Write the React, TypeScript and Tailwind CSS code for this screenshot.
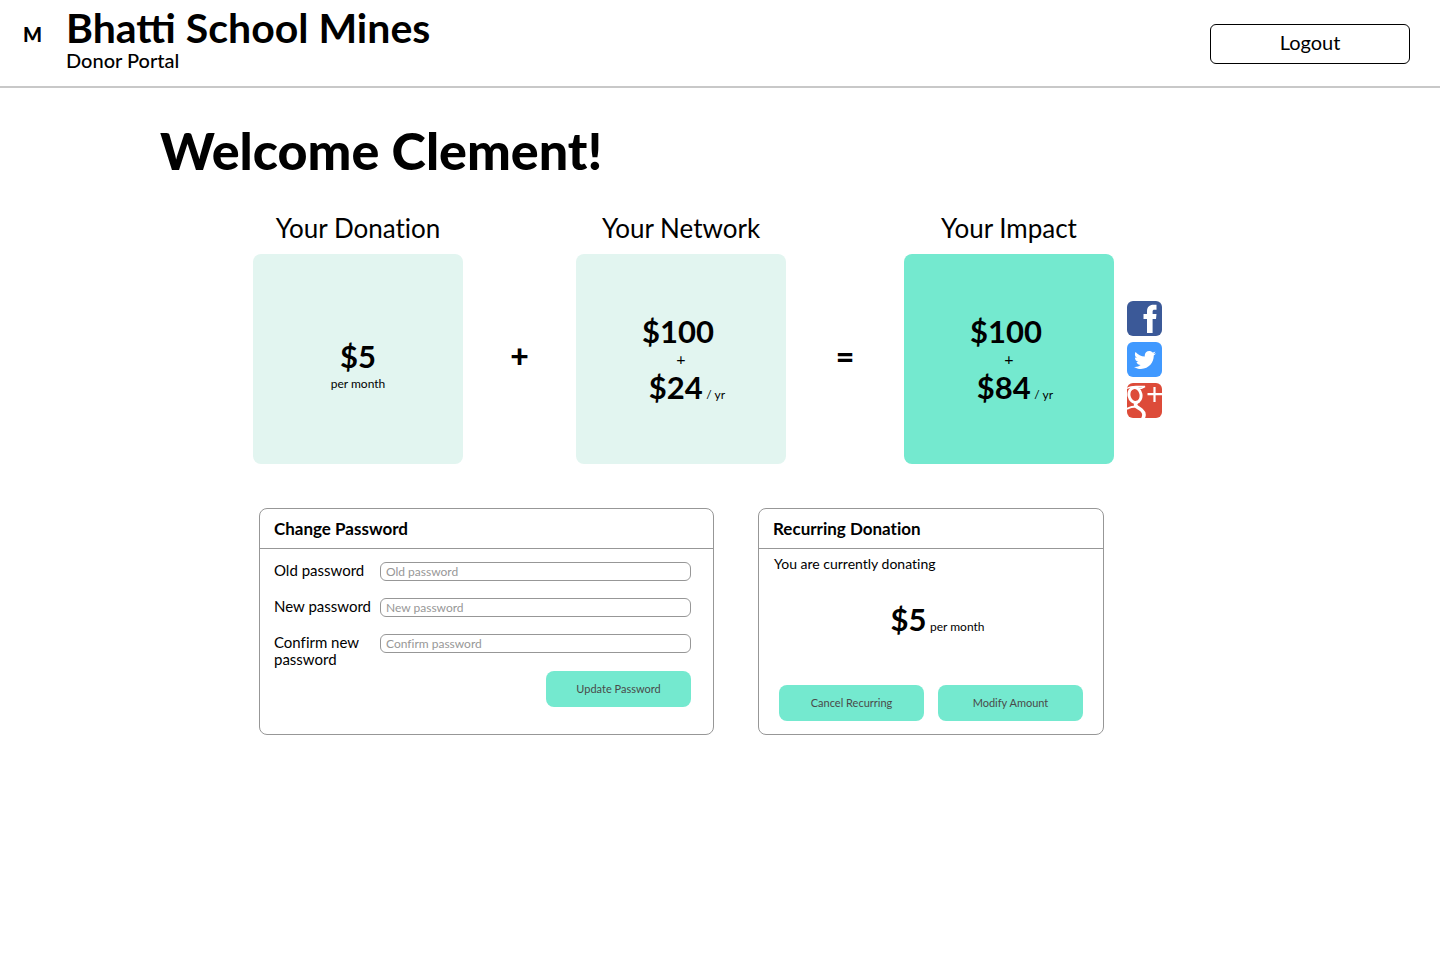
import type { ReactNode } from "react";
import { FaTwitter } from "react-icons/fa";

function Tile({ title, strong, children }: { title: string; strong?: boolean; children: ReactNode }) {
  return (
    <section className="flex w-[210px] flex-col items-center">
      <h2 className="mb-[10px] text-[26px] leading-8 whitespace-nowrap">{title}</h2>
      <div
        className={`flex h-[210px] w-full flex-col items-center justify-center rounded-lg ${
          strong ? "bg-[#74e9cf]" : "bg-[#e2f5f0]"
        }`}
      >
        {children}
      </div>
    </section>
  );
}

function Totals({ once, yearly }: { once: string; yearly: string }) {
  return (
    <>
      <p className="pr-[6px] text-[31px] leading-9 font-bold">{once}</p>
      <p className="text-base leading-5">+</p>
      <p className="pl-3 text-[31px] leading-9 font-bold">
        {yearly} <span className="-ml-1 text-xs font-normal">/ yr</span>
      </p>
    </>
  );
}

function Operator({ className, children }: { className: string; children: ReactNode }) {
  return <span className={`pt-[124px] text-center text-[32px] leading-10 font-black ${className}`}>{children}</span>;
}

function Panel({ title, className, children }: { title: string; className: string; children: ReactNode }) {
  return (
    <section className={`rounded-lg border border-[#979797] ${className}`}>
      <h3 className="border-b border-[#979797] px-[14px] py-2 text-[17px] leading-[23px] font-bold">{title}</h3>
      {children}
    </section>
  );
}

function Field({ id, label, placeholder }: { id: string; label: string; placeholder: string }) {
  return (
    <div className="flex h-9 items-start">
      <label htmlFor={id} className="w-[106px] pr-2 text-[15px] leading-[17px]">
        {label}
      </label>
      <input
        id={id}
        type="password"
        placeholder={placeholder}
        className="h-[19px] min-w-0 flex-1 rounded-md border border-[#979797] px-[5px] text-xs placeholder:text-[#979797]"
      />
    </div>
  );
}

function ActionButton({ children }: { children: ReactNode }) {
  return (
    <button type="button" className="h-9 w-[145px] rounded-lg bg-[#74e9cf] text-[11px] text-[#4a4a4a]">
      {children}
    </button>
  );
}

export default function App() {
  return (
    <div className="min-h-screen bg-white font-[Lato,sans-serif] text-black">
      <header className="flex items-start justify-between border-b-2 border-[#c8c8c8] pr-[30px] pb-[14px] pl-[23px]">
        <div className="flex">
          <span className="w-[43px] pt-[22px] text-xl leading-6 font-black">M</span>
          <div className="pt-[6px]">
            <h1 className="text-[41px] leading-[43px] font-bold">Bhatti School Mines</h1>
            <p className="text-[20px] leading-[23px] font-medium">Donor Portal</p>
          </div>
        </div>
        <button type="button" className="mt-6 h-10 w-[200px] rounded-md border border-black pb-1 text-xl leading-6">
          Logout
        </button>
      </header>

      <main className="mx-auto max-w-[1120px] pt-8 [font-variant-ligatures:none]">
        <h1 className="text-[52px] leading-[60px] font-black">Welcome Clement!</h1>

        <div className="mt-8 flex pl-[93px]">
          <Tile title="Your Donation">
            <p className="pt-[14px] text-[31px] leading-9 font-bold">$5</p>
            <p className="text-xs leading-5">per month</p>
          </Tile>
          <Operator className="w-[113px]">+</Operator>
          <Tile title="Your Network">
            <Totals once="$100" yearly="$24" />
          </Tile>
          <Operator className="w-[118px]">=</Operator>
          <Tile title="Your Impact" strong>
            <Totals once="$100" yearly="$84" />
          </Tile>
          <nav className="ml-[13px] flex flex-col gap-[6px] pt-[89px]">
            <a href="#facebook" aria-label="Facebook">
              <svg viewBox="0 0 35 35" className="size-[35px] rounded-md bg-[#3b5998]">
                <path
                  d="M20 32V18h-3.500v-5H20v-2.500C20 6 22.500 3.800 26.500 3.800H29.500V8.800H27.500C26.200 8.800 25.600 9.400 25.600 10.800V13H29.500L29 18H25.600V32z"
                  fill="#fff"
                />
              </svg>
            </a>
            <a
              href="#twitter"
              aria-label="Twitter"
              className="flex size-[35px] items-center justify-center rounded-md bg-[#4099ff] text-white"
            >
              <FaTwitter size={22} />
            </a>
            <a href="#google" aria-label="Google Plus">
              <svg viewBox="0 0 35 35" className="size-[35px] rounded-md bg-[#dd4b39]" fill="none" stroke="#fff">
                <ellipse cx="8" cy="12" rx="6" ry="7.500" strokeWidth="3" transform="rotate(-12 8 12)" />
                <path d="M0 5.500C3 3.500 6 3.500 9 3.500H18L14.500 5.300H11" strokeWidth="1.500" />
                <path d="M10 19.500C6 23 11 24 14.500 27C18 30 17.500 33.500 15 37" strokeWidth="3.500" />
                <path d="M0 26C3 24 7 23.500 11 23.600" strokeWidth="2" />
                <path d="M27.500 4v15M20.500 11.200H35" strokeWidth="2.200" />
              </svg>
            </a>
          </nav>
        </div>

        <div className="mt-11 flex gap-11 pl-[99px]">
          <Panel title="Change Password" className="w-[455px]">
            <form className="pt-[13px] pr-[22px] pb-[27px] pl-[14px]">
              <Field id="old" label="Old password" placeholder="Old password" />
              <Field id="new" label="New password" placeholder="New password" />
              <Field id="confirm" label="Confirm new password" placeholder="Confirm password" />
              <div className="flex justify-end pt-px">
                <ActionButton>Update Password</ActionButton>
              </div>
            </form>
          </Panel>
          <Panel title="Recurring Donation" className="w-[346px]">
            <p className="px-[15px] pt-[6px] text-[14px] leading-[18px]">You are currently donating</p>
            <p className="pt-7 pb-12 pl-[13px] text-center text-[31px] leading-9 font-bold">
              $5 <span className="-ml-1 text-xs font-normal">per month</span>
            </p>
            <div className="flex justify-center gap-[14px]">
              <ActionButton>Cancel Recurring</ActionButton>
              <ActionButton>Modify Amount</ActionButton>
            </div>
          </Panel>
        </div>
      </main>
    </div>
  );
}
